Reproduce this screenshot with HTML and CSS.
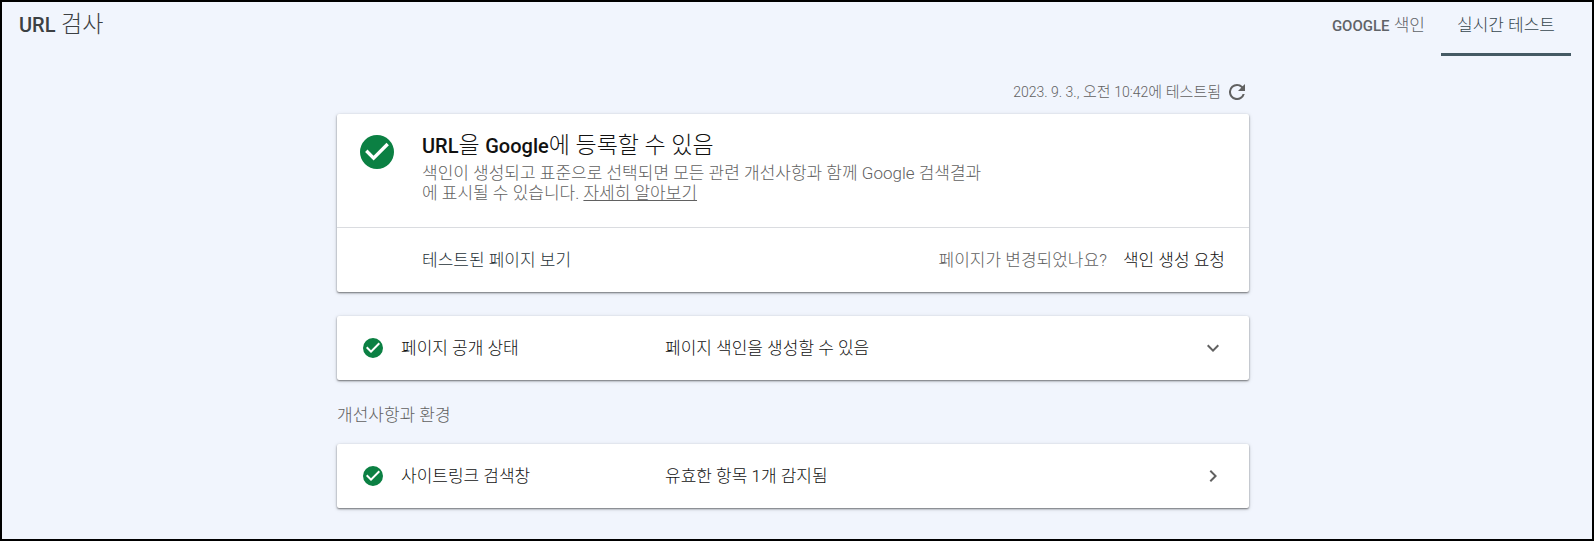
FILE: index.html
```html
<!DOCTYPE html>
<html lang="ko">
<head>
<meta charset="utf-8">
<meta name="viewport" content="width=device-width, initial-scale=1">
<title>URL 검사</title>
<link rel="stylesheet" href="styles.css">
</head>
<body>
<header class="topbar">
  <h1 class="page-title"><span class="latin-title">URL</span> 검사</h1>
  <nav class="tabs">
    <a class="tab" href="#index"><span class="latin-tab">GOOGLE</span> 색인</a>
    <a class="tab tab-active" href="#live" aria-current="page">실시간 테스트</a>
  </nav>
</header>
<main class="content">
  <div class="tested">
    <span><span class="latin-small">2023. 9. 3.,</span> 오전 <span class="latin-small">10:42</span>에 테스트됨</span>
    <button class="refresh" type="button" aria-label="다시 테스트">
      <svg class="refresh-icon" viewBox="4 4 16 16"><path d="M17.65 6.35A7.96 7.96 0 0 0 12 4a8 8 0 1 0 7.73 10h-2.08A6 6 0 1 1 12 6c1.66 0 3.14.69 4.22 1.78L13 11h7V4z"/></svg>
    </button>
  </div>
  <section class="card">
    <div class="verdict">
      <svg class="check check-large" viewBox="2 2 20 20"><path d="M12 2a10 10 0 1 0 0 20 10 10 0 0 0 0-20zm-2 15-5-5 1.410-1.410L10 14.170l7.590-7.590L19 8z"/></svg>
      <div class="verdict-text">
        <h2 class="verdict-title"><span class="latin-title">URL</span>을 <span class="latin-title">Google</span>에 등록할 수 있음</h2>
        <p class="verdict-body">색인이 생성되고 표준으로 선택되면 모든 관련 개선사항과 함께 Google 검색결과에 표시될 수 있습니다. <a class="learn" href="#learn">자세히 알아보기</a></p>
      </div>
    </div>
    <div class="actions">
      <button class="action" type="button">테스트된 페이지 보기</button>
      <span class="question">페이지가 변경되었나요?</span>
      <button class="action action-strong" type="button">색인 생성 요청</button>
    </div>
  </section>
  <button class="card row" type="button" aria-expanded="false">
    <svg class="check" viewBox="2 2 20 20"><path d="M12 2a10 10 0 1 0 0 20 10 10 0 0 0 0-20zm-2 15-5-5 1.410-1.410L10 14.170l7.590-7.590L19 8z"/></svg>
    <span class="row-name">페이지 공개 상태</span>
    <span class="row-value">페이지 색인을 생성할 수 있음</span>
    <svg class="chevron" viewBox="0 0 24 24"><path d="M7.410 8.590 12 13.170l4.590-4.580L18 10l-6 6-6-6z"/></svg>
  </button>
  <h3 class="group-title">개선사항과 환경</h3>
  <button class="card row" type="button">
    <svg class="check" viewBox="2 2 20 20"><path d="M12 2a10 10 0 1 0 0 20 10 10 0 0 0 0-20zm-2 15-5-5 1.410-1.410L10 14.170l7.590-7.590L19 8z"/></svg>
    <span class="row-name">사이트링크 검색창</span>
    <span class="row-value">유효한 항목 1개 감지됨</span>
    <svg class="chevron" viewBox="0 0 24 24"><path d="M8.590 16.590 13.170 12 8.590 7.410 10 6l6 6-6 6z"/></svg>
  </button>
</main>
</body>
</html>
```
FILE: styles.css
```css
* {
  box-sizing: border-box;
}

body {
  margin: 0;
  min-height: 100vh;
  border: 2px solid #000;
  background: #f1f5fd;
  color: #111;
  font-family: Roboto, "Noto Sans CJK KR", sans-serif;
  font-size: 17px;
  font-weight: 300;
  line-height: 20px;
}

button {
  border: 0;
  padding: 0;
  background: none;
  color: inherit;
  font: inherit;
  text-align: left;
  cursor: pointer;
}

h1,
h2,
h3,
p {
  margin: 0;
  font-size: inherit;
  font-weight: inherit;
}

.latin-title {
  font-size: 20px;
  font-weight: 500;
}

.latin-tab {
  font-size: 15px;
  font-weight: 500;
}

.latin-small {
  font-size: 14px;
}

.topbar {
  display: flex;
  justify-content: space-between;
  padding: 0 21px 0 17px;
}

.page-title {
  padding-top: 11px;
  color: #3c4043;
  font-size: 23px;
  line-height: 24px;
}

.tabs {
  display: flex;
}

.tab {
  height: 54px;
  padding: 13px 16px 0;
  border-bottom: 3px solid transparent;
  color: #5f6368;
  text-decoration: none;
}

.tab-active {
  border-bottom-color: #455a64;
  color: #37474f;
}

.content {
  max-width: 920px;
  margin: 0 auto;
  padding: 22px 8px 30px 0;
}

.tested {
  display: flex;
  justify-content: flex-end;
  align-items: center;
  gap: 8px;
  height: 28px;
  padding-right: 4px;
  color: #616161;
  font-size: 15px;
}

.refresh {
  display: flex;
}

.refresh-icon {
  width: 16px;
  height: 16px;
  fill: #616161;
}

.card {
  width: 100%;
  border-radius: 2px;
  background: #fff;
  box-shadow: 0 1px 2px rgba(0, 0, 0, .5), 0 1px 5px rgba(0, 0, 0, .12);
}

.tested + .card {
  margin-top: 8px;
}

.check {
  flex: none;
  width: 20px;
  height: 20px;
  fill: #0b8043;
}

.check-large {
  width: 34px;
  height: 34px;
}

.verdict {
  display: flex;
  align-items: flex-start;
  gap: 28px;
  padding: 20px 24px 24px 23px;
  border-bottom: 1px solid #dadce0;
}

.check-large {
  margin-top: 1px;
}

.verdict-title {
  font-size: 23px;
  line-height: 24px;
}

.verdict-body {
  max-width: 570px;
  margin-top: 5px;
  color: #616161;
}

.learn {
  color: inherit;
}

.actions {
  display: flex;
  align-items: center;
  gap: 16px;
  height: 64px;
  padding: 0 24px 0 85px;
}

.action {
  color: #263238;
}

.action-strong {
  color: #111;
}

.question {
  margin-left: auto;
  color: #616161;
}

.row {
  display: flex;
  align-items: center;
  height: 64px;
  margin-top: 24px;
  padding: 0 24px 0 26px;
}

.row-name {
  width: 264px;
  margin-left: 18px;
}

.row-value {
  flex: 1;
}

.chevron {
  width: 24px;
  height: 24px;
  fill: #616161;
}

.group-title {
  margin-top: 25px;
  color: #616161;
}

.group-title + .row {
  margin-top: 19px;
}
```
